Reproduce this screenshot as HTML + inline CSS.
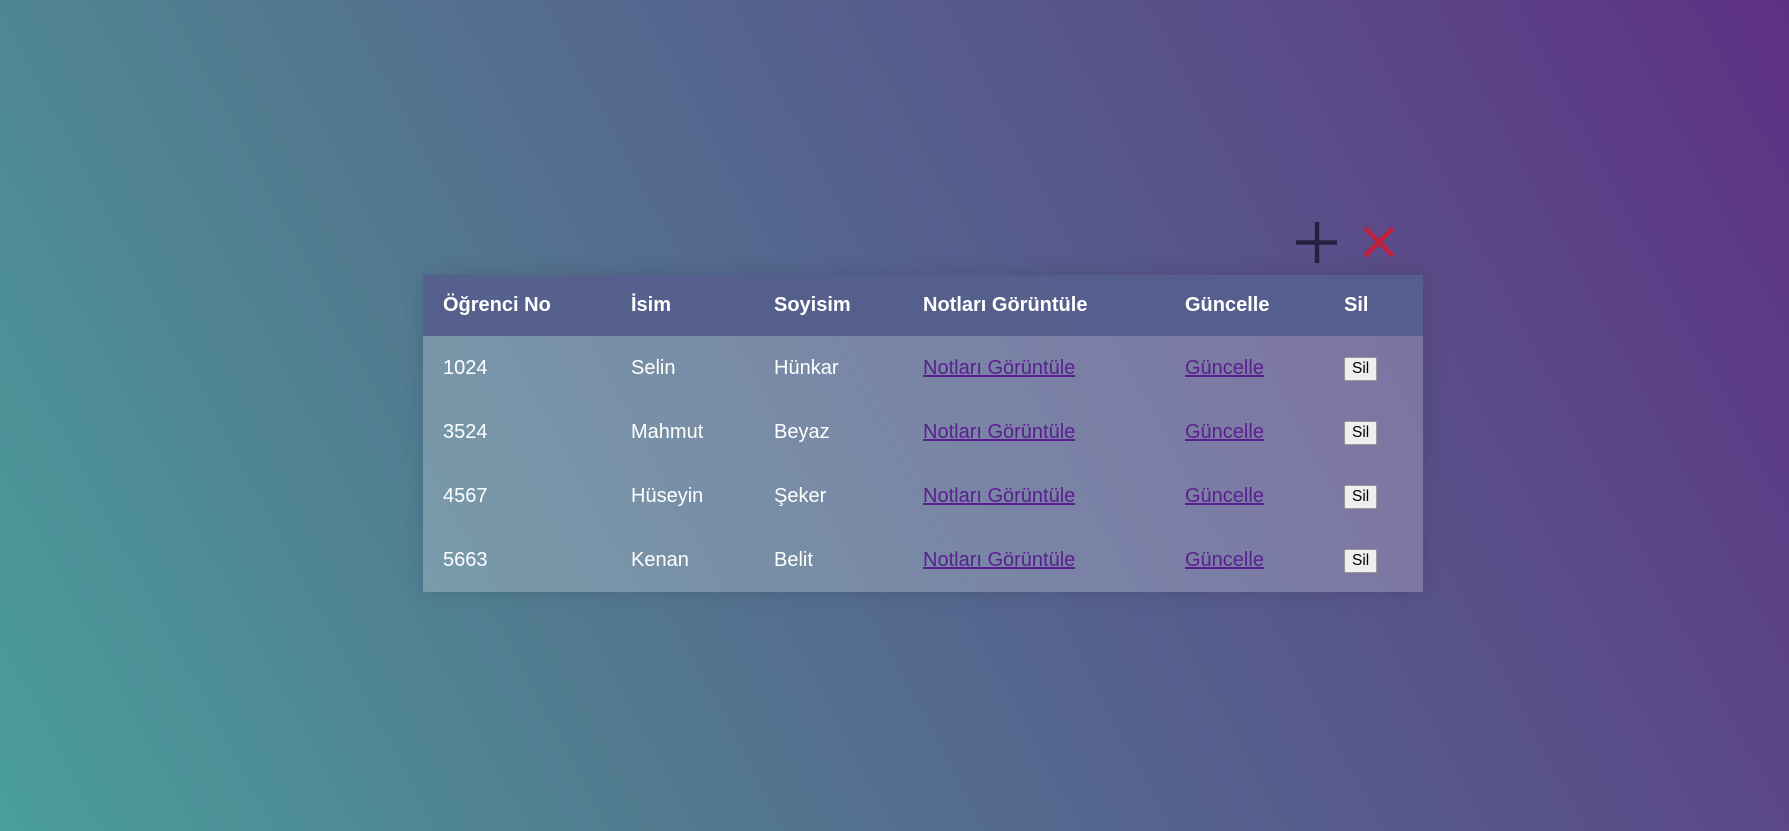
<!DOCTYPE html>
<html><head><meta charset="utf-8"><style>
html,body{margin:0;width:1789px;height:831px;overflow:hidden}
body{background:linear-gradient(62deg,#4a9e9b 0%,#527a90 30%,#55608d 55%,#5a4a88 78%,#5e3083 100%);font-family:"Liberation Sans",sans-serif;position:relative}
table{position:absolute;left:423px;top:275px;width:1000px;border-collapse:collapse;box-shadow:0 0 20px rgba(0,0,0,0.12);font-size:20px;color:#fff}
thead tr{background:rgba(85,95,140,0.95);height:61px}
th{text-align:left;font-weight:bold;padding:0 0 0 20px}
tbody tr{height:64px;background:rgba(255,255,255,0.22)}
td{padding:0 0 0 20px}
a{color:#5a1f8f}
button{font-family:"Liberation Sans",sans-serif;font-size:15.5px;padding:2px 7px;background:#efefef;border:1px solid #999;border-radius:2px;color:#000}
</style></head><body>
<svg style="position:absolute;left:1290px;top:218px" width="120" height="50">
<path d="M27 4V45M6 24.5H47" stroke="#262040" stroke-width="4.5"/>
<path d="M75 10L103 38M103 10L75 38" stroke="#c0203a" stroke-width="4.5"/>
</svg>
<table>
<colgroup><col style="width:188px"><col style="width:143px"><col style="width:149px"><col style="width:262px"><col style="width:159px"><col></colgroup>
<thead><tr><th>Öğrenci No</th><th>İsim</th><th>Soyisim</th><th>Notları Görüntüle</th><th>Güncelle</th><th>Sil</th></tr></thead>
<tbody>
<tr><td>1024</td><td>Selin</td><td>Hünkar</td><td><a href="#">Notları Görüntüle</a></td><td><a href="#">Güncelle</a></td><td><button>Sil</button></td></tr>
<tr><td>3524</td><td>Mahmut</td><td>Beyaz</td><td><a href="#">Notları Görüntüle</a></td><td><a href="#">Güncelle</a></td><td><button>Sil</button></td></tr>
<tr><td>4567</td><td>Hüseyin</td><td>Şeker</td><td><a href="#">Notları Görüntüle</a></td><td><a href="#">Güncelle</a></td><td><button>Sil</button></td></tr>
<tr><td>5663</td><td>Kenan</td><td>Belit</td><td><a href="#">Notları Görüntüle</a></td><td><a href="#">Güncelle</a></td><td><button>Sil</button></td></tr>
</tbody></table>
</body></html>
